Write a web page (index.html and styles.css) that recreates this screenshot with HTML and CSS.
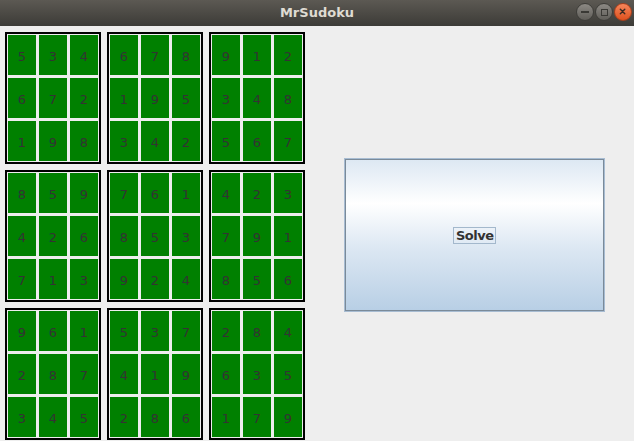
FILE: index.html
```html
<!DOCTYPE html>
<html>
<head>
<meta charset="utf-8">
<link rel="stylesheet" href="styles.css">
</head>
<body>
<div class="window">
  <div class="titlebar">
    <div class="tb-left"></div>
    <div class="title">MrSudoku</div>
    <div class="tb-buttons">
      <span class="wbtn wbtn-min"><span class="dash"></span></span>
      <span class="wbtn wbtn-max"><span class="sq"></span></span>
      <span class="wbtn wbtn-close">
        <svg width="18" height="18" viewBox="0 0 18 18"><path d="M6 6 L11 11 M11 6 L6 11" stroke="#3a2a22" stroke-width="1.6" stroke-linecap="round"/></svg>
      </span>
    </div>
  </div>
  <div class="content">
    <div class="board">
      <div class="box"><div class="cells"><span>5</span><span>3</span><span>4</span><span>6</span><span>7</span><span>2</span><span>1</span><span>9</span><span>8</span></div></div>
      <div class="box"><div class="cells"><span>6</span><span>7</span><span>8</span><span>1</span><span>9</span><span>5</span><span>3</span><span>4</span><span>2</span></div></div>
      <div class="box"><div class="cells"><span>9</span><span>1</span><span>2</span><span>3</span><span>4</span><span>8</span><span>5</span><span>6</span><span>7</span></div></div>
      <div class="box"><div class="cells"><span>8</span><span>5</span><span>9</span><span>4</span><span>2</span><span>6</span><span>7</span><span>1</span><span>3</span></div></div>
      <div class="box"><div class="cells"><span>7</span><span>6</span><span>1</span><span>8</span><span>5</span><span>3</span><span>9</span><span>2</span><span>4</span></div></div>
      <div class="box"><div class="cells"><span>4</span><span>2</span><span>3</span><span>7</span><span>9</span><span>1</span><span>8</span><span>5</span><span>6</span></div></div>
      <div class="box"><div class="cells"><span>9</span><span>6</span><span>1</span><span>2</span><span>8</span><span>7</span><span>3</span><span>4</span><span>5</span></div></div>
      <div class="box"><div class="cells"><span>5</span><span>3</span><span>7</span><span>4</span><span>1</span><span>9</span><span>2</span><span>8</span><span>6</span></div></div>
      <div class="box"><div class="cells"><span>2</span><span>8</span><span>4</span><span>6</span><span>3</span><span>5</span><span>1</span><span>7</span><span>9</span></div></div>
    </div>
    <div class="side">
      <button class="solve"><span class="focus">Solve</span></button>
    </div>
  </div>
</div>
</body>
</html>
```
FILE: styles.css
```css
html, body {
  margin: 0;
  padding: 0;
  background: #eeeeee;
}
.window {
  width: 634px;
  height: 441px;
  overflow: hidden;
  background: #eeeeee;
}
.titlebar {
  height: 26px;
  display: grid;
  grid-template-columns: 1fr auto 1fr;
  align-items: center;
  background: linear-gradient(#5c5953, #3c3b37);
}
.title {
  font-family: "DejaVu Sans", sans-serif;
  font-weight: bold;
  font-size: 13px;
  color: #dfdbd2;
  padding-bottom: 2px;
}
.tb-buttons {
  justify-self: end;
  display: flex;
  gap: 1px;
  margin-right: 2px;
  padding-bottom: 2px;
}
.wbtn {
  width: 18px;
  height: 18px;
  border-radius: 50%;
  box-sizing: border-box;
  display: flex;
  align-items: center;
  justify-content: center;
}
.wbtn-min, .wbtn-max {
  background: linear-gradient(#8c8984, #5f5d58);
  border: 1px solid #3e3d39;
}
.wbtn-close {
  background: linear-gradient(#f5865b, #df511e);
  border: 1px solid #a8401d;
}
.dash {
  width: 8px;
  height: 2px;
  background: #3a3935;
}
.sq {
  width: 5px;
  height: 5px;
  border: 1px solid #3a3935;
}
.content {
  display: flex;
}
.board {
  display: grid;
  grid-template-columns: repeat(3, 96px);
  grid-template-rows: repeat(3, 132px);
  gap: 6px;
  padding: 6px 0 0 5px;
}
.box {
  border: 2px solid #000;
  padding: 1px;
  background: #eeeeee;
}
.cells {
  display: grid;
  grid-template-columns: repeat(3, 28px);
  grid-template-rows: repeat(3, 40px);
  gap: 3px;
}
.cells span {
  background: #008000;
  display: flex;
  align-items: center;
  justify-content: center;
  font-family: "DejaVu Sans", sans-serif;
  font-size: 13px;
  color: #333333;
  padding-top: 2px;
  box-sizing: border-box;
}
.side {
  padding: 133px 0 0 40px;
}
.solve {
  width: 259px;
  height: 152px;
  margin: 0;
  padding: 0;
  box-sizing: border-box;
  border: 1px solid #7a8a99;
  box-shadow: 0 0 0 1px #a7bcd2;
  background: linear-gradient(#dde8f3 0%, #ffffff 29%, #dde8f3 58%, #b8cfe5 100%);
  display: flex;
  align-items: center;
  justify-content: center;
  font-family: "DejaVu Sans", sans-serif;
  font-weight: bold;
  font-size: 13px;
  letter-spacing: -0.5px;
  color: #333333;
}
.focus {
  border: 1px solid #a3b8cc;
  padding: 1px 1px 1px 1.5px;
  line-height: 13px;
}
```
